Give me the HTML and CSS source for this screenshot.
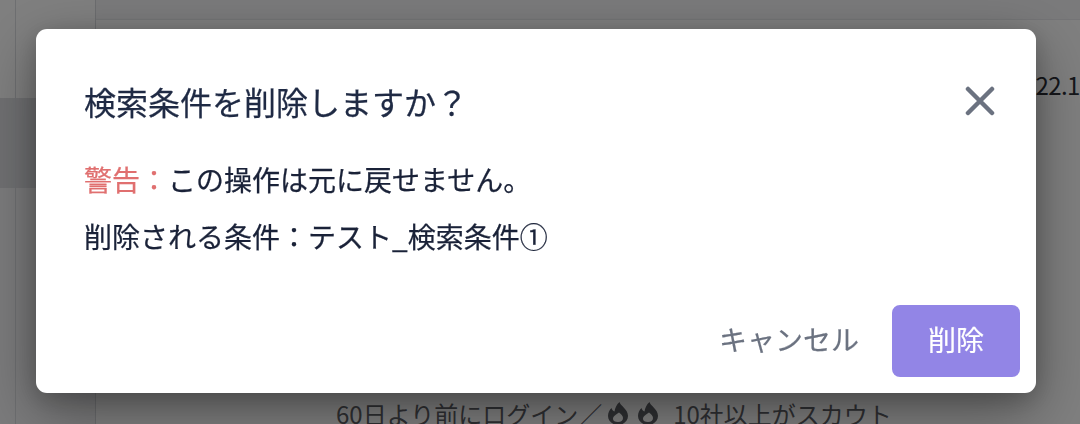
FILE: index.html
```html
<!DOCTYPE html>
<html lang="ja">
<head>
<meta charset="utf-8">
<title>検索条件を削除</title>
<link rel="stylesheet" href="styles.css">
</head>
<body>
<div class="page">
  <div class="side">
    <div class="side-top"></div>
    <div class="side-active"></div>
    <div class="side-rest"></div>
  </div>
  <div class="main">
    <div class="date">2022.10</div>
    <div class="condition">60日より前にログイン／<svg class="flame" viewBox="0 0 20 23"><path d="M11.500 0c.5 3.500 8.500 7 8.500 14 0 5-4.500 9-10 9S0 19 0 14c0-3.500 1.500-6 3.500-8 .5 2 1.500 3 3 3.500C7 6 8.500 2.500 11.500 0z M11 10.500c-3 2-6 3.500-6 6.500 0 2 2 3 5 3s5-1.500 5-4c0-2-2-4-4-5.500z" fill-rule="evenodd"/></svg><svg class="flame" viewBox="0 0 20 23"><path d="M11.500 0c.5 3.500 8.500 7 8.500 14 0 5-4.500 9-10 9S0 19 0 14c0-3.500 1.500-6 3.500-8 .5 2 1.500 3 3 3.500C7 6 8.500 2.500 11.500 0z M11 10.500c-3 2-6 3.500-6 6.500 0 2 2 3 5 3s5-1.500 5-4c0-2-2-4-4-5.500z" fill-rule="evenodd"/></svg><span class="count">10社以上がスカウト</span></div>
  </div>
</div>
<div class="overlay"></div>
<div class="modal" role="dialog">
  <header class="modal-head">
    <h2 class="modal-title">検索条件を削除しますか？</h2>
    <svg class="close" viewBox="0 0 30 30"><path d="M3 3l24 24M27 3L3 27"/></svg>
  </header>
  <div class="modal-body">
    <p class="line"><span class="warn">警告：</span>この操作は元に戻せません。</p>
    <p class="line">削除される条件：テスト_検索条件①</p>
  </div>
  <footer class="modal-foot">
    <span class="cancel">キャンセル</span>
    <span class="delete">削除</span>
  </footer>
</div>
</body>
</html>
```
FILE: styles.css
```css
* { box-sizing: border-box; }
html, body { margin: 0; height: 100%; overflow: hidden; }
body {
  font-family: "Noto Sans CJK JP", "Noto Sans", sans-serif;
  background: #f4f5f7;
  color: #1a202c;
}
.page { display: flex; height: 424px; }
.side { width: 96px; flex: none; display: flex; flex-direction: column; border-right: 1px solid #d8dade; position: relative; }
.side::before { content: ""; position: absolute; left: 15px; top: 0; bottom: 0; width: 1px; background: #dcdee2; }
.side-top { height: 98px; background: #fff; }
.side-active { height: 90px; background: #dfe0e4; }
.side-rest { flex: 1; background: #f6f6f8; }
.main { flex: 1; position: relative; background: #fff; margin-top: 20px; box-shadow: 0 -1px 0 #e8e9ec; }
.date { position: absolute; left: 914px; top: 50px; font-size: 24px; line-height: 30px; letter-spacing: -.6px; white-space: nowrap; color: #2a2c34; }
.condition { position: absolute; left: 240px; top: 377px; font-size: 24px; line-height: 34px; white-space: nowrap; display: flex; align-items: center; color: #5e6066; }
.flame { width: 20px; height: 23px; fill: currentColor; margin-left: 10px; align-self: flex-start; margin-top: 5px; }
.condition .flame:first-of-type { margin-left: 6px; }
.count { margin-left: 15px; }
.overlay { position: fixed; inset: 0; background: rgba(0, 0, 0, .5); }
.modal {
  position: fixed;
  left: 36px; top: 29px;
  width: 1000px; height: 364px;
  background: #fff;
  border-radius: 11px;
  box-shadow: 0 20px 60px rgba(0, 0, 0, .36), 0 6px 24px rgba(0, 0, 0, .2);
  display: flex;
  flex-direction: column;
  padding: 49px 16px 16px 48px;
}
.modal-head { display: flex; justify-content: space-between; align-items: center; padding-right: 25px; height: 48px; margin-top: -1px; }
.modal-title { margin: 0; font-size: 32px; font-weight: 400; line-height: 48px; color: #1f2a44; -webkit-text-stroke: .25px #1f2a44; }
.close { width: 30px; height: 30px; fill: none; stroke: #6b7280; stroke-width: 4.500; stroke-linecap: round; }
.modal-body { margin-top: 33px; }
.line { margin: 0; font-size: 28px; line-height: 42px; color: #1a2238; -webkit-text-stroke: .25px currentColor; }
.line + .line { margin-top: 15px; }
.warn { color: #e07070; }
.modal-foot { margin-top: auto; display: flex; justify-content: flex-end; align-items: center; }
.cancel { font-size: 28px; line-height: 42px; color: #6b7280; margin-right: 33px; padding-bottom: 4px; -webkit-text-stroke: .2px currentColor; }
.delete {
  width: 128px; height: 72px;
  background: #9285e6;
  color: #fff;
  font-size: 28px;
  border-radius: 8px;
  padding-bottom: 4px;
  -webkit-text-stroke: .2px currentColor;
  display: flex; align-items: center; justify-content: center;
}
```
